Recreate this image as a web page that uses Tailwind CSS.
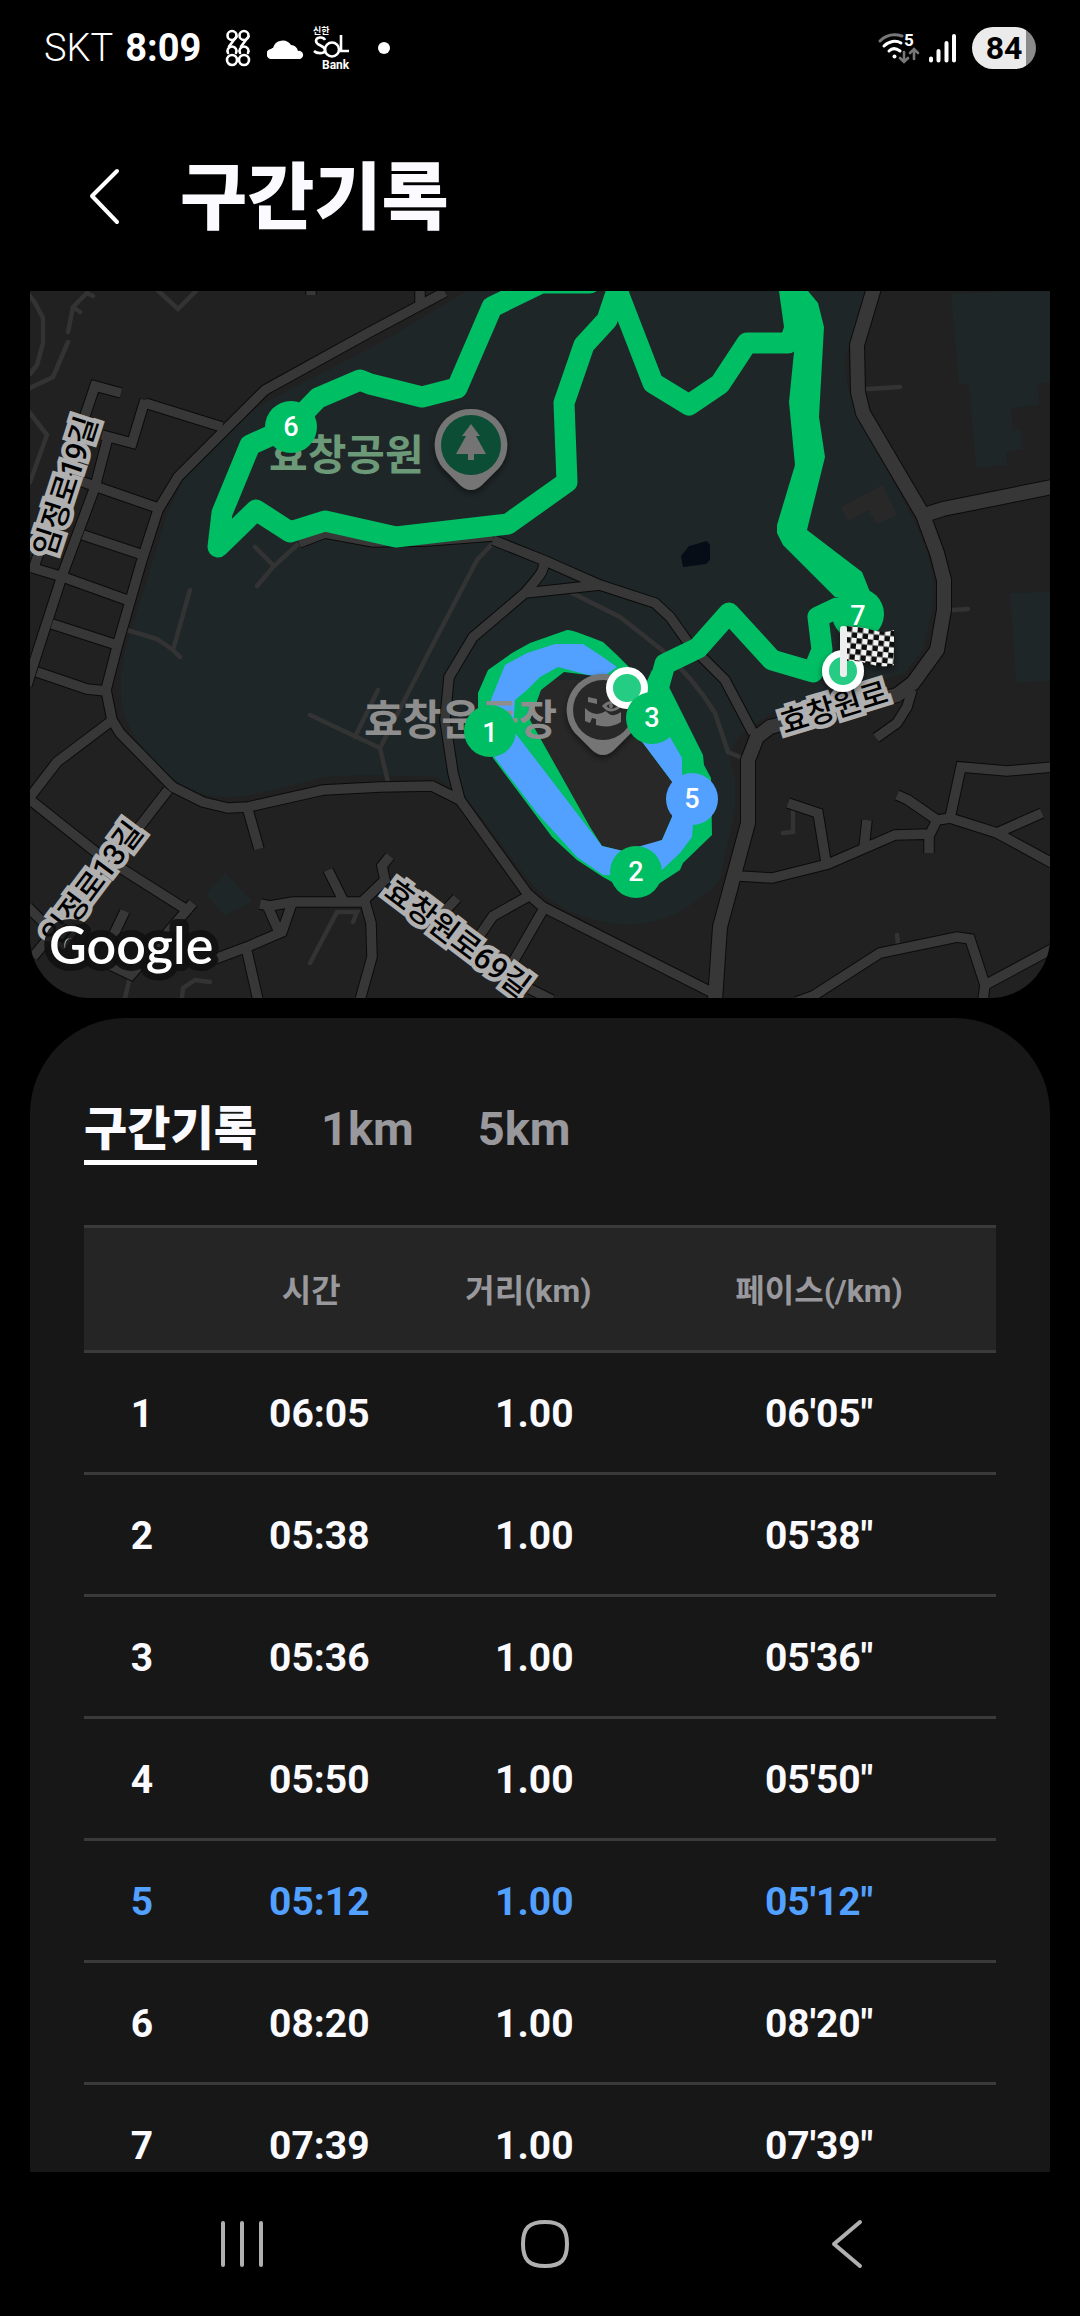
<!DOCTYPE html>
<html lang="ko">
  <head>
    <meta charset="utf-8" />
    <meta name="viewport" content="width=device-width, initial-scale=1" />
    <title>구간기록</title>
    <script src="https://cdn.jsdelivr.net/npm/@tailwindcss/browser@4"></script>
  </head>
  <body
    class="h-screen flex flex-col overflow-hidden bg-black text-[#fafaff] font-[Roboto,'Noto_Sans_CJK_KR',sans-serif]"
  >
    <!-- Status bar -->
    <div class="h-24 shrink-0 flex items-center justify-between px-11 text-white">
      <div class="flex items-center">
        <span class="text-[38px] leading-10 font-light">SKT</span>
        <span class="ml-3 text-[38px] leading-10 font-bold">8:09</span>
        <svg class="ml-6 w-[26px] h-[38px]" viewBox="0 0 26 38" fill="none" stroke="#fff" stroke-width="2.600" stroke-linecap="round">
          <circle cx="7" cy="6.500" r="4.500" />
          <circle cx="19" cy="6.500" r="4.500" />
          <path d="M11.500 7.500 4 17.500M23.500 7.500 16 17.500" />
          <circle cx="7" cy="31" r="5" />
          <circle cx="19" cy="31" r="5" />
          <path d="M3 24a4.500 4.500 0 1 1 8 0M15 24a4.500 4.500 0 1 1 8 0" />
        </svg>
        <svg class="ml-4 w-[37px] h-[21px]" viewBox="0 0 37 21" fill="#fff">
          <path d="M5 21a5 5 0 0 1-1-10c1-1 1-1 2-1a10 10 0 0 1 18-3 8 8 0 0 1 7 6 4 4 0 0 1 2 8z" />
        </svg>
        <svg class="ml-2 w-[42px] h-[50px]" viewBox="0 0 42 50" fill="none" stroke="#fff" stroke-width="2.600">
          <text x="1" y="11" font-size="9" fill="#fff" stroke="none" font-weight="700">신한</text>
          <path d="M13 17c-2-4-9-3-9 1 0 5 9 4 9 9 0 4-8 4-11 1" />
          <circle cx="20" cy="26.500" r="7" />
          <path d="M29 12v16h8" />
          <text x="10" y="46" font-size="12" fill="#fff" stroke="none" font-weight="700">Bank</text>
        </svg>
        <span class="ml-6 size-3 rounded-full bg-white"></span>
      </div>
      <div class="flex items-center">
        <svg class="w-[42px] h-8" viewBox="0 0 42 32" fill="none" stroke-width="3" stroke-linecap="round">
          <path d="M2 9c7-7 15-7 22-5" stroke="#777" />
          <path d="M6 14c5-5 12-6 17-3M11 19c3-3 7-3 11 0" stroke="#fff" />
          <circle cx="16.500" cy="24.500" r="2" fill="#fff" />
          <path d="M26 20v9m-4-3 4 4 4-4M36 27v-9m-4 3 4-4 4 4" stroke="#777" stroke-width="2.600" />
          <text x="26" y="14" font-size="17" font-weight="700" fill="#fff">5</text>
        </svg>
        <svg class="ml-2 w-7 h-[30px]" viewBox="0 0 28 30" stroke="#fff" stroke-width="4" stroke-linecap="round">
          <path d="M3 25.500v2M10.500 18v9.500M18.500 10v17.500M26 3v24.500" />
        </svg>
        <span
          class="ml-4 w-16 h-[42px] rounded-full bg-linear-to-r from-[#ebebeb] from-84% to-[#8a8a8a] to-84% flex items-center justify-center text-black text-[32px] leading-10 font-bold"
          >84</span
        >
      </div>
    </div>

    <header class="h-[195px] shrink-0 flex items-center pl-20 pt-2">
      <button type="button" aria-label="뒤로" class="w-12 h-16 flex items-center justify-center">
        <svg class="w-8 h-[60px]" viewBox="0 0 32 60" fill="none" stroke="#fff" stroke-width="4" stroke-linecap="round" stroke-linejoin="round">
          <path d="M29 3 4 28l25 26" />
        </svg>
      </button>
      <h1 class="ml-[52px] text-[73px] leading-[80px] font-black">구간기록</h1>
    </header>

    <main class="flex-1 min-h-0 overflow-y-auto [scrollbar-width:none] px-[30px]">
      <!-- Route map -->
      <svg class="block w-full h-auto rounded-b-[60px] bg-[#212121]" viewBox="30 291 1020 707" role="img" aria-label="경로 지도">
        <defs>
          <g id="roads">
            <path d="M445 292 370 332 265 390 178 477 158 510 142 560 117 647 106 690 112 720 120 733 163 777 173 787 203 802 228 808 248 807 323 790 380 787 432 786 460 800 527 893 543 907 715 994" />
            <path d="M420 288V304M311 288V295M121 393 95 386 33 570M145 403 222 427M102 435 132 443 145 400M108 437 95 487 63 573 38 650 27 685M80 481 158 508M83 535 143 555M30 567 63 577 127 600M52 624 117 645M37 672 87 689 106 691M110 722 57 762 30 797M29 799 97 853 187 910 193 903M187 910 131 975 63 942 28 907M168 790 137 830 33 957M125 911 103 957" />
            <path d="M248 810 259 849M260 904 270 906 293 902 365 902M328 870 344 902M268 907 279 932M292 903 282 932 247 947 215 959M246 947 258 1000M365 902 371 923 372 957 360 1000M362 902 385 880 382 866 390 856M527 897 493 916 480 935M543 910 513 962M457 898 443 913M530 989 552 1000" />
            <path d="M493 540 543 560 600 585 655 603 670 617 690 645 725 680 753 733M543 560C546 570 540 575 525 593L473 637 449 677 445 720 453 773 460 800M525 593 600 585M299 543 325 533 373 542 427 541 493 536" />
            <path d="M912 690 907 707 897 723 876 738M738 876 772 878 828 864 895 835 930 834 937 820 950 818 997 833 1052 863M950 818 961 767 1007 771 1052 767M937 820 908 800 897 795M929 834V853M997 833 1042 813M864 848 867 820M826 862 818 813 788 803M796 1002 813 996 880 953 957 937 970 939 985 985 983 1000M985 985 1052 949" />
          </g>
          <g id="highways">
            <path d="M874 288 857 345 858 392 863 413 923 515 937 553 944 580V610L937 650 913 683 897 695 770 727 757 737 748 760V823L720 927 715 1000" />
            <path d="M921 516 943 509 1052 487" />
          </g>
          <pattern id="checks" width="11" height="11" patternUnits="userSpaceOnUse" patternTransform="translate(847 626) rotate(6)">
            <rect width="11" height="11" fill="#f2f2f2" />
            <path d="M0 0h5.500v11H11V5.500H0z" fill="#111" />
          </pattern>
          <filter id="shadow" x="-30%" y="-30%" width="160%" height="160%">
            <feDropShadow dx="0" dy="3" stdDeviation="3" flood-opacity="0.5" />
          </filter>
        </defs>

        <!-- parks, pond, buildings -->
        <path fill="#1f2628" d="M380 343 270 400Q225 425 183 480L167 513 147 580 127 643Q118 675 122 707 130 740 163 770 195 800 233 797 250 797 320 778 345 773 437 777L470 803 523 873Q555 918 623 925 680 925 720 880L735 810V780L730 757Q732 740 750 727L773 712 905 673 923 650Q936 600 933 580 930 550 907 507L857 413Q838 370 850 343L867 291H467Z" />
        <path fill="#1f2628" d="M951 294 1050 290V382L1038 383 1039 405 1011 408 1013 431 1021 430 1023 449 1006 452 1007 465 976 468 969 385 959 384ZM1010 593 1050 592V681L1016 683ZM225 873 253 902 225 915 206 895Z" />
        <path fill="#060d17" d="M681 556 689 546 707 541 710 545V560L706 564 683 567Z" />
        <path fill="#282828" d="M841 507 862 496 882 485 897 515 877 524 868 510 848 521Z" />

        <!-- footpaths -->
        <path
          fill="none"
          stroke="#333"
          stroke-width="4.500"
          stroke-linecap="round"
          d="M30 296 35 303 43 318V343L37 365 30 374M68 332 73 307 87 293 93 296M73 307 80 312M68 342 53 377 30 388M30 413 47 435 30 482M155 288 178 309 199 288M127 630 157 639 173 650 180 657M173 650 190 590M257 586 274 566 297 545M255 547 274 566M493 543 477 560 430 650 380 748 388 782M310 715 380 748M355 737 378 690M570 592 620 617 662 650Q695 680 715 713L728 752 742 758M867 389 900 387M952 610 968 609M130 977 125 998M182 998 183 988 195 980 210 982M310 963 337 912 357 912 353 922M793 810 793 832 783 833M897 935 898 945"
        />

        <g fill="none" stroke="#0b0b0b">
          <use href="#roads" stroke-width="11.500" />
          <use href="#highways" stroke-width="16" />
        </g>
        <g fill="none" stroke="#373737">
          <use href="#roads" stroke-width="9.500" />
          <use href="#highways" stroke-width="14" />
        </g>

        <!-- street names -->
        <g
          font-size="30"
          font-weight="500"
          text-anchor="middle"
          fill="#000"
          stroke="#b0b0b0"
          stroke-width="9"
          paint-order="stroke"
        >
          <text transform="translate(65 486) rotate(-72)" y="11">임정로19길</text>
          <text transform="translate(92 883) rotate(-53)" y="11">임정로13길</text>
          <text transform="translate(458 938) rotate(37)" y="11">효창원로69길</text>
          <text transform="translate(834 707) rotate(-17)" y="11">효창원로</text>
        </g>

        <!-- running route -->
        <g fill="none" stroke="#00be64" stroke-width="21" stroke-linecap="round" stroke-linejoin="round">
          <path d="M590 283H541L492 307 457 388 422 397 370 384 360 380 318 398 290 427 250 445 222 513 218 547 256 510 290 532 325 521 396 537 508 524 567 482 564 403 584 345 607 320 617 290 653 383 689 405 720 384 747 343H788" />
          <path d="M837 608 818 617 822 650 813 672 772 660 729 613 698 648 665 664 655 700" />
        </g>
        <path fill="#00be64" d="M779 291 784 327 782 333 794 352 789 402 795 465 777 525V533L783 545 835 597H872L862 572 807 530 825 457 819 417 824 327 818 303 808 291Z" />
        <path fill="#282828" d="M530 680H640L680 790 660 850H590L530 740Z" />
        <path
          fill="#00be64"
          fill-rule="evenodd"
          d="M478 693 488 670 512 653 530 643 567 630Q570 629 590 637L603 642 617 655 630 668 643 690 652 670 668 685 703 755 704 765 711 778 712 835 683 863 680 870 660 883 650 890 623 888 603 877 577 860 552 837 493 758 478 707ZM541 690 564 672 588 675 603 677 627 703 643 743 673 783 672 817 662 840 643 847 623 851 602 846 590 827 530 720 533 712Z"
        />
        <path fill="#52a0ff" d="M617 667 600 655 583 644H555L527 653 505 665 492 697 480 733 495 758 537 813 577 857 603 875 610 875 640 885 662 870 680 853 692 837 693 825 700 790 682 776V758L670 737 640 740 643 743 673 783 672 817 662 840 623 851 602 846 513 730 515 700 527 690 540 677 558 667 588 675 603 677Z" />

        <!-- places -->
        <g font-size="42" font-weight="700">
          <text x="269" y="470" fill="#6c9a78">효창공원</text>
          <text x="364" y="735" fill="#8e8e8e">효창운동장</text>
        </g>
        <g filter="url(#shadow)" fill="#747474">
          <path d="M471 409a36 36 0 0 1 28 59L482 485Q471 495 460 485L443 468A36 36 0 0 1 471 409Z" />
          <path d="M603 674a36 36 0 0 1 28 59L614 750Q603 760 592 750L575 733A36 36 0 0 1 603 674Z" />
        </g>
        <circle cx="471" cy="445" r="30" fill="#0b4d35" />
        <path fill="#747474" d="M471 424 480 436H476L486 454H474V460H468V454H456L466 436H462Z" />
        <circle cx="603" cy="710" r="30" fill="#282828" />
        <path fill="#747474" d="M588 697 597 699V704L588 702ZM585 708Q595 718 606 711 612 719 621 712V722Q610 729 596 725V719L592 718 590 723 585 721Z" />
        <path fill="none" stroke="#747474" stroke-width="3" d="M604 706Q611 699 620 706 611 714 604 706Z" />
        <circle cx="611" cy="706" r="2" fill="#747474" />

        <!-- start and kilometre markers -->
        <circle cx="627" cy="688" r="17.500" fill="#25cc83" stroke="#fff" stroke-width="7" />
        <g fill="#00be64">
          <circle cx="490" cy="731" r="26" />
          <circle cx="636" cy="872" r="26" />
          <circle cx="652" cy="718" r="26" />
          <circle cx="291" cy="427" r="26" />
          <circle cx="858" cy="614" r="26" />
        </g>
        <circle cx="692" cy="799" r="26" fill="#52a0ff" />
        <g fill="#fff" font-size="27" font-weight="500" text-anchor="middle">
          <text x="490" y="742">1</text>
          <text x="636" y="881">2</text>
          <text x="652" y="727">3</text>
          <text x="692" y="808">5</text>
          <text x="291" y="436">6</text>
          <text x="858" y="625">7</text>
        </g>

        <!-- finish flag -->
        <g filter="url(#shadow)">
          <circle cx="843" cy="671" r="17.500" fill="#25cc83" stroke="#fff" stroke-width="7" />
          <path d="M847 626Q860 626 872 630T894 630V665Q882 668 870 664T847 661Z" fill="url(#checks)" />
          <rect x="840" y="626" width="7" height="51" rx="3" fill="#eee" />
        </g>

        <text
          x="49"
          y="964"
          font-family="Lato, sans-serif"
          font-size="52"
          font-weight="600"
          fill="#fff"
          stroke="#111"
          stroke-opacity="0.9"
          stroke-width="14"
          stroke-linejoin="round"
          paint-order="stroke"
        >
          Google
        </text>
      </svg>

      <!-- Lap records -->
      <section class="mt-5 pt-20 px-[54px] rounded-t-[96px] bg-[#171717]">
        <div class="flex items-start gap-16 text-[47px] leading-[62px] font-bold" role="tablist">
          <button type="button" role="tab" aria-selected="true" class="border-b-[5px] border-white font-black">구간기록</button>
          <button type="button" role="tab" aria-selected="false" class="text-[#98989d]">1km</button>
          <button type="button" role="tab" aria-selected="false" class="text-[#98989d]">5km</button>
        </div>

        <table class="mt-[60px] w-full table-fixed border-collapse text-center">
          <colgroup>
            <col class="w-[13.6%]" />
            <col class="w-[24.4%]" />
            <col class="w-[23.2%]" />
            <col class="w-[38.8%]" />
          </colgroup>
          <thead>
            <tr class="h-[125px] border-y-3 border-[#3a3a3a] bg-[#252525] text-[32px] text-[#98989d]">
              <th scope="col" aria-label="구간"></th>
              <th scope="col" class="pt-1 pr-4 font-bold">시간</th>
              <th scope="col" class="pt-1 pr-4 font-bold">거리(km)</th>
              <th scope="col" class="pt-1 font-bold">페이스(/km)</th>
            </tr>
          </thead>
          <tbody class="text-[39px] font-bold">
            <tr class="h-[122px] border-b-3 border-[#3a3a3a]">
              <td class="pt-1 pr-2">1</td>
              <td class="pt-1">06:05</td>
              <td class="pt-1 pr-1">1.00</td>
              <td class="pt-1">06'05"</td>
            </tr>
            <tr class="h-[122px] border-b-3 border-[#3a3a3a]">
              <td class="pt-1 pr-2">2</td>
              <td class="pt-1">05:38</td>
              <td class="pt-1 pr-1">1.00</td>
              <td class="pt-1">05'38"</td>
            </tr>
            <tr class="h-[122px] border-b-3 border-[#3a3a3a]">
              <td class="pt-1 pr-2">3</td>
              <td class="pt-1">05:36</td>
              <td class="pt-1 pr-1">1.00</td>
              <td class="pt-1">05'36"</td>
            </tr>
            <tr class="h-[122px] border-b-3 border-[#3a3a3a]">
              <td class="pt-1 pr-2">4</td>
              <td class="pt-1">05:50</td>
              <td class="pt-1 pr-1">1.00</td>
              <td class="pt-1">05'50"</td>
            </tr>
            <tr class="h-[122px] border-b-3 border-[#3a3a3a] text-[#52a0ff]">
              <td class="pt-1 pr-2">5</td>
              <td class="pt-1">05:12</td>
              <td class="pt-1 pr-1">1.00</td>
              <td class="pt-1">05'12"</td>
            </tr>
            <tr class="h-[122px] border-b-3 border-[#3a3a3a]">
              <td class="pt-1 pr-2">6</td>
              <td class="pt-1">08:20</td>
              <td class="pt-1 pr-1">1.00</td>
              <td class="pt-1">08'20"</td>
            </tr>
            <tr class="h-[122px] border-b-3 border-[#3a3a3a]">
              <td class="pt-1 pr-2">7</td>
              <td class="pt-1">07:39</td>
              <td class="pt-1 pr-1">1.00</td>
              <td class="pt-1">07'39"</td>
            </tr>
          </tbody>
        </table>
      </section>
    </main>

    <!-- System navigation -->
    <nav class="h-36 shrink-0 grid grid-cols-3 items-center justify-items-center pl-[92px] pr-[82px]">
      <button type="button" aria-label="최근 앱">
        <svg class="size-[52px]" viewBox="0 0 52 52" stroke="#b0b0b0" stroke-width="4" stroke-linecap="round">
          <path d="M6 5v42M25 5v42M44 5v42" />
        </svg>
      </button>
      <button type="button" aria-label="홈">
        <svg class="size-[52px]" viewBox="0 0 52 52" fill="none" stroke="#b0b0b0" stroke-width="4">
          <path d="M26 4C42 4 48 10 48 26S42 48 26 48 4 42 4 26 10 4 26 4Z" />
        </svg>
      </button>
      <button type="button" aria-label="뒤로 가기">
        <svg class="size-[52px]" viewBox="0 0 52 52" fill="none" stroke="#b0b0b0" stroke-width="4" stroke-linecap="round" stroke-linejoin="round">
          <path d="M39 4 13 26l26 22" />
        </svg>
      </button>
    </nav>
  </body>
</html>
